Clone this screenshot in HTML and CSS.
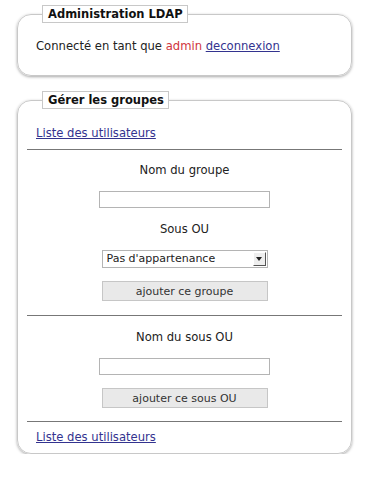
FILE: index.html
```html
<!DOCTYPE html>
<html lang="fr">
<head>
<meta charset="utf-8">
<title>Administration LDAP</title>
<link rel="stylesheet" href="styles.css">
</head>
<body>
<fieldset class="box box-top">
  <legend class="box-title">Administration LDAP</legend>
  <p class="status">Connecté en tant que <span class="user">admin</span> <a class="link" href="#">deconnexion</a></p>
</fieldset>

<fieldset class="box box-groups">
  <legend class="box-title">Gérer les groupes</legend>
  <p class="nav"><a class="link" href="#">Liste des utilisateurs</a></p>
  <hr class="sep">
  <form class="form form-group">
    <label class="label" for="grp">Nom du groupe</label>
    <input class="field" id="grp" type="text">
    <label class="label" for="ou">Sous OU</label>
    <div class="select-wrap">
      <select class="select" id="ou"><option>Pas d'appartenance</option></select>
      <span class="select-arrow"><svg width="6" height="4" viewBox="0 0 6 4"><path d="M0 0h6L3 4z" fill="#222"/></svg></span>
    </div>
    <button class="btn" type="button">ajouter ce groupe</button>
  </form>
  <hr class="sep">
  <form class="form form-ou">
    <label class="label" for="sou">Nom du sous OU</label>
    <input class="field" id="sou" type="text">
    <button class="btn" type="button">ajouter ce sous OU</button>
  </form>
  <hr class="sep">
  <p class="nav nav-bottom"><a class="link" href="#">Liste des utilisateurs</a></p>
</fieldset>
</body>
</html>
```

FILE: styles.css
```css
html, body {
  margin: 0;
  padding: 0;
  background: #fff;
}
body {
  font-family: "DejaVu Sans", Verdana, sans-serif;
  font-size: 11.6px;
  line-height: 16px;
  color: #222;
}
.box {
  margin: 5px 17px 0;
  padding: 0 9px 21px;
  border: 1px solid #c8c8c8;
  border-radius: 14px;
  box-shadow: 0 1px 3px rgba(0, 0, 0, 0.35);
  min-inline-size: 0;
}
.box-groups {
  margin-top: 15px;
  padding-bottom: 8px;
}
.box-title {
  margin-left: 15px;
  padding: 0 4px 0 5px;
  border: 1px solid #c8c8c8;
  background: #fff;
  font-weight: bold;
  font-size: 11.5px;
  color: #111;
  line-height: 16px;
}
.status {
  margin: 15px 0 0 9px;
}
.user {
  color: #d0353d;
}
.link {
  color: #33338f;
  text-decoration: underline;
}
.nav {
  margin: 16px 0 8px 9px;
}
.nav-bottom {
  margin-top: 7px;
  margin-bottom: 0;
}
.sep {
  margin: 0;
  border: 0;
  border-top: 1px solid #777;
  height: 0;
}
.form {
  display: flex;
  flex-direction: column;
  align-items: center;
  gap: 13px;
}
.form-group {
  padding: 12px 0 14px;
}
.form-ou {
  padding: 13px 0 13px;
}
.label {
  display: block;
}
.field {
  box-sizing: border-box;
  width: 171px;
  height: 17px;
  margin: 0;
  border: 1px solid #b4b4b4;
  background: #fff;
  padding: 0 3px;
}
.select-wrap {
  position: relative;
  width: 166px;
  height: 18px;
}
.select {
  appearance: none;
  -webkit-appearance: none;
  box-sizing: border-box;
  width: 166px;
  height: 18px;
  margin: 0;
  border: 1px solid #b4b4b4;
  background: #fff;
  font-family: "DejaVu Sans", Verdana, sans-serif;
  font-size: 11px;
  line-height: 16px;
  padding: 0 0 0 4px;
  color: #222;
  border-radius: 0;
}
.select-arrow {
  position: absolute;
  right: 2px;
  top: 2px;
  width: 13px;
  height: 14px;
  box-sizing: border-box;
  background: #eee;
  border-top: 1px solid #fff;
  border-left: 1px solid #fff;
  border-right: 1px solid #555;
  border-bottom: 1px solid #555;
  display: flex;
  align-items: center;
  justify-content: center;
}
.btn {
  box-sizing: border-box;
  width: 166px;
  height: 20px;
  margin: 0;
  border: 1px solid #c6c6c6;
  background: #e9e9e9;
  font-family: "DejaVu Sans", Verdana, sans-serif;
  font-size: 11px;
  color: #333;
  padding: 0;
}
```
